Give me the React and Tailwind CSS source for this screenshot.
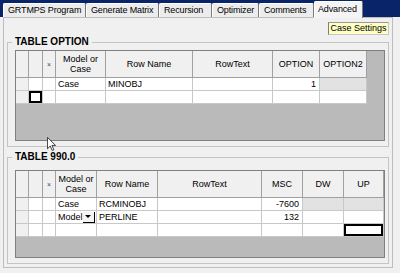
import React from "react";

const cols1 = ["w-[13px]", "w-[14px]", "w-[13px]", "w-[50px]", "w-[87px]", "w-[80px]", "w-[47px]", "w-[47px]"];
const cols2 = ["w-[13px]", "w-[14px]", "w-[13px]", "w-[41px]", "w-[61px]", "w-[104px]", "w-[41px]", "w-[41px]", "w-[40px]"];

function HCell({ w, children }) {
  return (
    <div className={`${w} h-full shrink-0 bg-[#f0f0f0] border-r border-b border-[#a0a0a0] flex items-center justify-center text-center text-[9px] leading-[10px] text-black`}>
      {children}
    </div>
  );
}

function DCell({ w, bg = "bg-white", align = "justify-start pl-[2px]", sel = false, children }) {
  return (
    <div
      className={`${w} h-full shrink-0 ${bg} border-r border-b border-[#c8c8c8] flex items-center ${align} text-[9px] leading-none text-black ${
        sel ? "shadow-[inset_0_0_0_2px_#000]" : ""
      }`}
    >
      {children}
    </div>
  );
}

function Mark() {
  return <span className="text-[7px] leading-none text-[#444]">×</span>;
}

function ModelHeader() {
  return (
    <span>
      Model or
      <br />
      Case
    </span>
  );
}

function Dropdown() {
  return (
    <div className="w-[13px] h-[11px] bg-[#f4f4f4] border-r border-b border-r-black border-b-black flex items-center justify-center mr-[1px]">
      <svg width="6" height="3" viewBox="0 0 6 3">
        <path d="M0 0 H6 L3 3 Z" fill="#000" />
      </svg>
    </div>
  );
}

function Group({ title, className, children }) {
  return (
    <div className={`relative ml-[3px] w-[382px] border border-[#c4c4c4] ${className}`}>
      <div className="absolute left-[4px] -top-[7px] h-[12px] px-[3px] bg-[#f0f0f0] text-[10px] leading-[12px] font-bold text-black">
        {title}
      </div>
      {children}
    </div>
  );
}

export default function App() {
  const tabs = [
    { label: "GRTMPS Program", w: "w-[83px]" },
    { label: "Generate Matrix", w: "w-[73px]" },
    { label: "Recursion", w: "w-[53px]" },
    { label: "Optimizer", w: "w-[47px]" },
    { label: "Comments", w: "w-[55px]" },
  ];
  return (
    <div className="relative w-[400px] h-[273px] overflow-hidden bg-[#f0f0f0] font-['Liberation_Sans',Arial,sans-serif] text-black">
      {/* Tab strip */}
      <div className="h-[17px] bg-[#0a246a] flex items-end pl-[3px]">
        {tabs.map((t) => (
          <div
            key={t.label}
            className={`${t.w} h-[14px] shrink-0 overflow-hidden bg-[#ececec] border-t border-l border-white border-r border-r-[#7a7a7a] rounded-t-[2px] flex items-center pl-[4px] text-[9px] tracking-[-0.15px] leading-none whitespace-nowrap`}
          >
            {t.label}
          </div>
        ))}
        <div className="relative z-10 w-[49px] h-[17px] -mb-px shrink-0 bg-[#f4f4f4] border-t border-l border-white border-r border-r-[#7a7a7a] rounded-t-[2px] flex items-start pt-[3px] pl-[3px] text-[9px] tracking-[-0.15px] leading-none whitespace-nowrap">
          Advanced
        </div>
      </div>

      {/* Tab panel */}
      <div className="ml-[3px] w-[390px] h-[251px] border border-[#bdbdbd] bg-[#f0f0f0] flex flex-col">
        <div className="self-end mr-[3px] mt-[4px] w-[61px] h-[13px] bg-[#ffffc4] border border-[#c8c8c8] border-l-[#7c7c7c] border-t-[#9a9a9a] flex items-center justify-center text-[9px] leading-none whitespace-nowrap">
          Case Settings
        </div>

        {/* TABLE OPTION */}
        <Group title="TABLE OPTION" className="mt-[7px] h-[105px]">
          <div className="mt-[7px] ml-[7px] w-[370px] h-[91px] border border-[#808080] bg-[#bababa] flex flex-col">
            <div className="flex h-[27px]">
              <HCell w={cols1[0]} />
              <HCell w={cols1[1]} />
              <HCell w={cols1[2]}>
                <Mark />
              </HCell>
              <HCell w={cols1[3]}>
                <ModelHeader />
              </HCell>
              <HCell w={cols1[4]}>Row Name</HCell>
              <HCell w={cols1[5]}>RowText</HCell>
              <HCell w={cols1[6]}>OPTION</HCell>
              <HCell w={cols1[7]}>OPTION2</HCell>
            </div>
            <div className="flex h-[13px]">
              <DCell w={cols1[0]} bg="bg-[#f0f0f0]" />
              <DCell w={cols1[1]} />
              <DCell w={cols1[2]} />
              <DCell w={cols1[3]}>Case</DCell>
              <DCell w={cols1[4]}>MINOBJ</DCell>
              <DCell w={cols1[5]} />
              <DCell w={cols1[6]} align="justify-end pr-[3px]">
                1
              </DCell>
              <DCell w={cols1[7]} bg="bg-[#e2e2e2]" />
            </div>
            <div className="flex h-[13px]">
              <DCell w={cols1[0]} bg="bg-[#f0f0f0]" />
              <DCell w={cols1[1]} sel />
              <DCell w={cols1[2]} />
              <DCell w={cols1[3]} />
              <DCell w={cols1[4]} />
              <DCell w={cols1[5]} />
              <DCell w={cols1[6]} />
              <DCell w={cols1[7]} />
            </div>
          </div>
        </Group>

        {/* TABLE 990.0 */}
        <Group title="TABLE 990.0" className="mt-[10px] h-[107px]">
          <div className="mt-[12px] ml-[7px] w-[370px] h-[88px] border border-[#808080] bg-[#bababa] flex flex-col">
            <div className="flex h-[27px]">
              <HCell w={cols2[0]} />
              <HCell w={cols2[1]} />
              <HCell w={cols2[2]}>
                <Mark />
              </HCell>
              <HCell w={cols2[3]}>
                <ModelHeader />
              </HCell>
              <HCell w={cols2[4]}>Row Name</HCell>
              <HCell w={cols2[5]}>RowText</HCell>
              <HCell w={cols2[6]}>MSC</HCell>
              <HCell w={cols2[7]}>DW</HCell>
              <HCell w={cols2[8]}>UP</HCell>
            </div>
            <div className="flex h-[13px]">
              <DCell w={cols2[0]} bg="bg-[#f0f0f0]" />
              <DCell w={cols2[1]} />
              <DCell w={cols2[2]} />
              <DCell w={cols2[3]}>Case</DCell>
              <DCell w={cols2[4]}>RCMINOBJ</DCell>
              <DCell w={cols2[5]} />
              <DCell w={cols2[6]} align="justify-end pr-[3px]">
                -7600
              </DCell>
              <DCell w={cols2[7]} bg="bg-[#e2e2e2]" />
              <DCell w={cols2[8]} bg="bg-[#e2e2e2]" />
            </div>
            <div className="flex h-[13px]">
              <DCell w={cols2[0]} bg="bg-[#f0f0f0]" />
              <DCell w={cols2[1]} />
              <DCell w={cols2[2]} />
              <DCell w={cols2[3]} align="justify-between pl-[2px]">
                <span>Model</span>
                <Dropdown />
              </DCell>
              <DCell w={cols2[4]}>PERLINE</DCell>
              <DCell w={cols2[5]} />
              <DCell w={cols2[6]} align="justify-end pr-[3px]">
                132
              </DCell>
              <DCell w={cols2[7]} />
              <DCell w={cols2[8]} />
            </div>
            <div className="flex h-[13px]">
              <DCell w={cols2[0]} bg="bg-[#f0f0f0]" />
              <DCell w={cols2[1]} />
              <DCell w={cols2[2]} />
              <DCell w={cols2[3]} />
              <DCell w={cols2[4]} />
              <DCell w={cols2[5]} />
              <DCell w={cols2[6]} />
              <DCell w={cols2[7]} />
              <DCell w={cols2[8]} sel />
            </div>
          </div>
        </Group>
      </div>

      {/* Mouse cursor */}
      <svg className="absolute left-[47px] top-[137px]" width="9" height="14" viewBox="0 0 12 19">
        <path d="M0.5 0.5 L0.5 16 L4.3 12.3 L7 18.3 L9.2 17.3 L6.6 11.4 L11.5 11.4 Z" fill="#fff" stroke="#000" strokeWidth="1" strokeLinejoin="miter" />
      </svg>
    </div>
  );
}
